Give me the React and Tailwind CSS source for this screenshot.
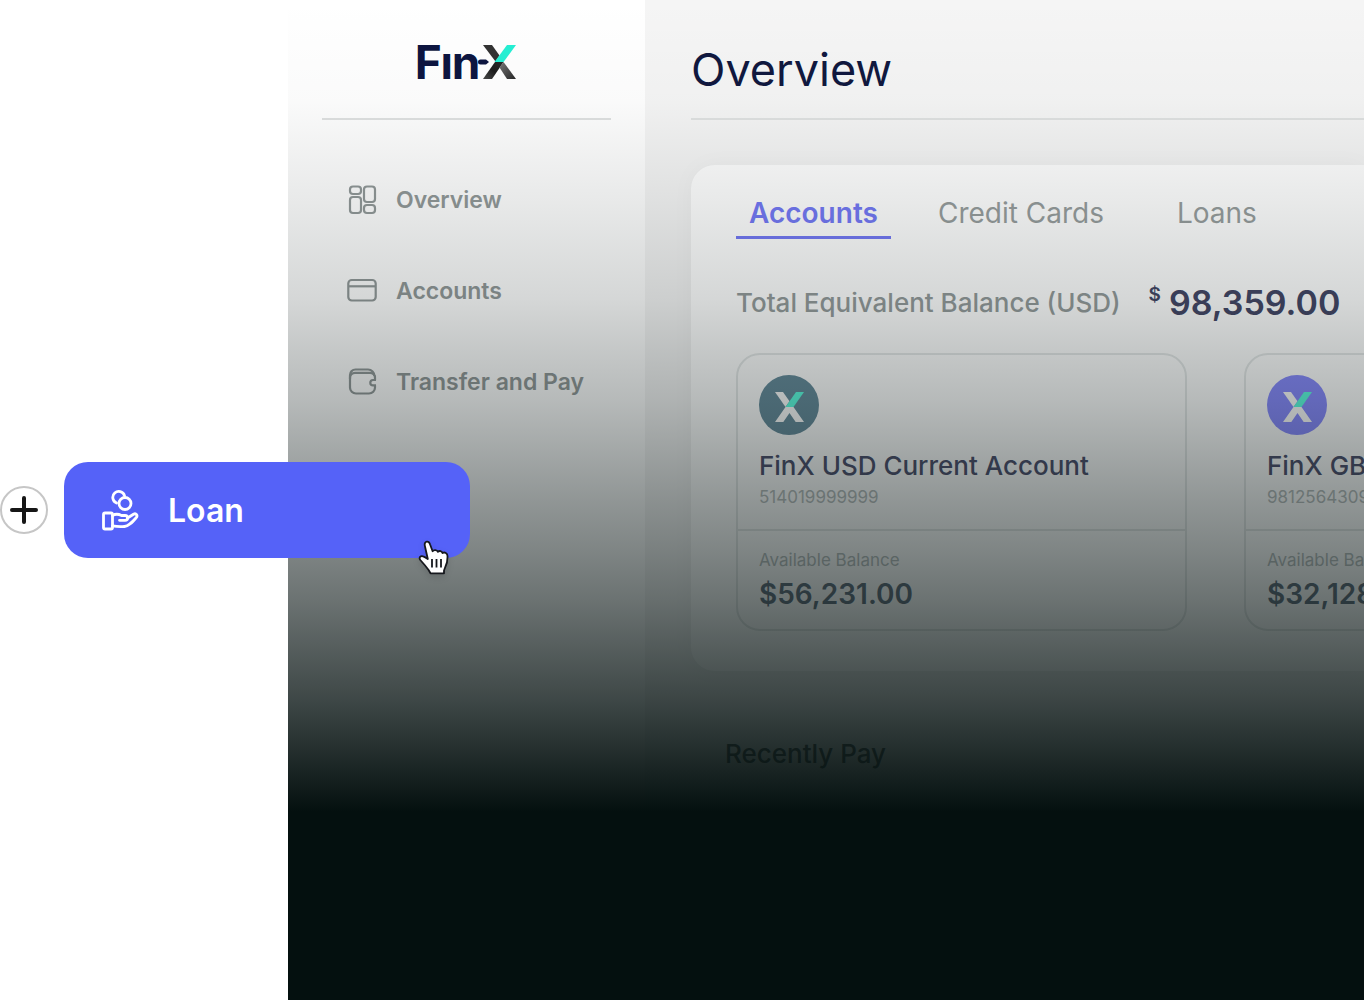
import React, { useState } from 'react';

const navItems = [
  { id: 'overview', label: 'Overview', icon: GridIcon },
  { id: 'accounts', label: 'Accounts', icon: CardIcon },
  { id: 'transfer', label: 'Transfer and Pay', icon: WalletIcon },
];

const tabs = ['Accounts', 'Credit Cards', 'Loans'];

const accounts = [
  { name: 'FinX USD Current Account', number: '514019999999', balance: '$56,231.00', badge: 'bg-[#688d9d]' },
  { name: 'FinX GBP Current Account', number: '981256430999', balance: '$32,128.00', badge: 'bg-[#8a8cff]' },
];

function GridIcon() {
  return (
    <svg width="30" height="30" viewBox="0 0 30 30" fill="none" stroke="currentColor" strokeWidth="2.2">
      <rect x="3" y="1.500" width="11" height="7.500" rx="3" />
      <rect x="3" y="12" width="11" height="16" rx="3" />
      <rect x="17" y="1.500" width="11" height="15.500" rx="3" />
      <rect x="17" y="20" width="11" height="8" rx="3" />
    </svg>
  );
}

function CardIcon() {
  return (
    <svg width="30" height="30" viewBox="0 0 30 30" fill="none" stroke="currentColor" strokeWidth="2.2">
      <rect x="1.300" y="4" width="27.400" height="20.500" rx="3.500" />
      <path d="M1.300 10.300h27.400" />
    </svg>
  );
}

function WalletIcon() {
  return (
    <svg width="30" height="30" viewBox="0 0 30 30" fill="none" stroke="currentColor" strokeWidth="2.2">
      <path d="M28 13v-2a5 5 0 0 0-5-5.200H8a5 5 0 0 0-5 5.200v9.500a6 6 0 0 0 6 6h13a6 6 0 0 0 6-6v-2" />
      <path d="M3 12V8a5.500 5.500 0 0 1 5.500-5.500h12.500A6.500 6.500 0 0 1 27.500 9" />
      <path d="M29 13h-3a2.700 2.700 0 0 0 0 5.400h3" />
    </svg>
  );
}

function LoanIcon() {
  return (
    <svg width="38" height="42" viewBox="0 0 38 42" fill="none" stroke="currentColor" strokeWidth="2.8" strokeLinecap="round" strokeLinejoin="round">
      <path d="M15.500 13a6 6 0 1 1 8-7.400" />
      <circle cx="24" cy="13.500" r="6" />
      <rect x="2.500" y="23" width="9" height="16" rx="1.500" />
      <path d="M11.500 25.500c3-1.800 6-1.500 9 0H24c3.500 0 3.500 4.800 0 4.800h-5.500" />
      <path d="M26.500 28l6-3.800c2.600-1.500 4.600 1.500 2.600 3.600C31 32.500 28 36 23.500 36.500c-4.500.4-8 .2-12-.6" />
    </svg>
  );
}

// X mark used on the account badges
function XMark() {
  return (
    <svg className="w-[29px] h-[30px] mt-1" viewBox="0 0 29 30">
      <path d="M0 0h8l6.500 9.300-4 5.700z" fill="#fff" />
      <path d="M21 0h8L18.500 15h-8z" fill="#5fffe1" />
      <path d="M0 30l10.500-15h8L29 30h-8.300L14.500 21 8.300 30z" fill="#fff" />
    </svg>
  );
}

function Logo() {
  return (
    <a href="#home" aria-label="FinX" className="flex items-center justify-center h-[50px] pr-0.5 text-[#0d1540]">
      <span className="text-[46px] leading-[50px] font-bold tracking-tight">Fın</span>
      <svg className="w-[38px] h-[34px] -ml-px" viewBox="0 0 38 34">
        <defs>
          <linearGradient id="leg-left" x1="0" y1="1" x2="1" y2="0">
            <stop offset="0" stopColor="#4a4a4a" />
            <stop offset="0.5" stopColor="#1c1c1c" />
            <stop offset="1" stopColor="#2a2a2a" />
          </linearGradient>
          <linearGradient id="leg-right" x1="0" y1="0" x2="1" y2="1">
            <stop offset="0" stopColor="#777" />
            <stop offset="1" stopColor="#262626" />
          </linearGradient>
        </defs>
        <path d="M2.500 14.500H8l3 2.500-3 2.500H2.500a2.500 2.500 0 0 1 0-5z" fill="#0d1540" />
        <path d="M5 0h9l7.500 10.500-4 6z" fill="#333" />
        <path d="M29 0h9L25.500 17h-9z" fill="#25f0d4" />
        <path d="M5 34l12-17h8.500l-4 6L14 34z" fill="url(#leg-left)" />
        <path d="M21.500 22.500l4-5.500L38 34h-9z" fill="url(#leg-right)" />
      </svg>
    </a>
  );
}

function AccountCard({ account }) {
  return (
    <article className="w-[451px] shrink-0 rounded-3xl border-2 border-[#e6e9e9]">
      <div className="px-[21px] pt-5 pb-5 border-b-2 border-[#e6e9e9]">
        <div className={`w-[60px] h-[60px] rounded-full flex items-center justify-center ${account.badge}`}>
          <XMark />
        </div>
        <h3 className="mt-[15px] text-[26px] leading-8 font-medium text-[#505370] whitespace-nowrap">{account.name}</h3>
        <p className="mt-[3px] text-[17px] leading-6 text-[#b8bebe]">{account.number}</p>
      </div>
      <div className="px-[21px] pt-[17px] pb-[17px]">
        <p className="text-[17px] leading-6 text-[#b8bfbf]">Available Balance</p>
        <p className="mt-1 text-[28px] leading-9 font-semibold text-[#64717f]">{account.balance}</p>
      </div>
    </article>
  );
}

function HandCursor() {
  return (
    <svg className="w-8 h-9 drop-shadow-md" viewBox="0 0 32 36" fill="#fff" stroke="#16181d" strokeWidth="1.800" strokeLinejoin="round">
      <path d="M9.800 19L7 6.500C6.200 3.800 7 2 8.800 1.700c1.800-.2 2.700.8 3.300 2.800l2.500 6.700c1-1.600 4.600-1.500 5.200.6 1.400-1.400 4.200-.9 4.700 1.200 2.200-1.200 5 0 5 3 .1 3-.4 7.800-2.200 11l-1.300 3.500v2.800H12.500L10.600 30C8 26.500 5.500 23.500 2.300 20c-1.700-2.400.2-4.600 2.800-3.600 1.800.6 3 1.400 4.700 2.600z" />
      <path d="M14 19v8.500M18.500 19v8.500M23 19v8.500" />
    </svg>
  );
}

const App = () => {
  const [activeTab, setActiveTab] = useState('Accounts');

  return (
    <div className="relative flex min-h-screen overflow-hidden bg-white pl-72 font-['Inter',sans-serif]">
      <div className="relative flex flex-1 min-w-0">
        {/* Sidebar */}
        <aside className="w-[357px] shrink-0 bg-white px-[34px]">
          <div className="pt-[37px] pb-[31px] border-b-2 border-[#dfe1e1]">
            <Logo />
          </div>
          <nav className="mt-[57px] flex flex-col gap-[45px] pl-[25px]">
            {navItems.map(({ id, label, icon: Icon }) => (
              <a key={id} href={`#${id}`} className="flex items-center gap-[19px] h-[46px] text-[#929999]">
                <Icon />
                <span className="text-[23px] leading-8 font-semibold whitespace-nowrap">{label}</span>
              </a>
            ))}
          </nav>
        </aside>

        {/* Content */}
        <main className="flex-1 min-w-0 overflow-hidden bg-[#f5f5f5] pl-[46px]">
          <header className="pt-10 pb-[18px] border-b-2 border-[#dfe1e1]">
            <h1 className="text-[45px] leading-[60px] text-[#10183f]">Overview</h1>
          </header>

          <section className="mt-[45px] rounded-l-3xl bg-white pl-[45px] pt-[26px] pb-10 shadow-[0_0_24px_rgba(0,0,0,0.03)]">
            <div role="tablist" className="flex">
              {tabs.map((tab) => (
                <button
                  key={tab}
                  role="tab"
                  aria-selected={activeTab === tab}
                  onClick={() => setActiveTab(tab)}
                  className={
                    activeTab === tab
                      ? 'mr-[34px] px-[13px] pb-px border-b-[3px] border-[#7479f5] text-[28px] leading-[44px] font-semibold text-[#7479f5] whitespace-nowrap'
                      : 'mr-[47px] px-[13px] pb-px border-b-[3px] border-transparent text-[28px] leading-[44px] text-[#979d9d] whitespace-nowrap'
                  }
                >
                  {tab}
                </button>
              ))}
            </div>

            <div className="mt-[40px] flex items-center h-12 whitespace-nowrap">
              <h2 className="text-[26px] leading-8 font-medium text-[#949b9b]">Total Equivalent Balance (USD)</h2>
              <span className="ml-7 mb-4 text-[19px] leading-6 font-semibold text-[#444766]">$</span>
              <span className="ml-2 text-[34px] leading-[46px] font-semibold text-[#444766]">98,359.00</span>
            </div>

            <div className="mt-[26px] flex gap-[57px]">
              {accounts.map((account) => (
                <AccountCard key={account.number} account={account} />
              ))}
            </div>
          </section>

          <h2 className="mt-[67px] ml-[34px] text-[26px] leading-8 font-medium text-[#606868]">Recently Pay</h2>
        </main>

        {/* Fade to dark towards the bottom */}
        <div className="pointer-events-none absolute inset-0 bg-[linear-gradient(180deg,rgba(4,16,15,0)_0px,rgba(4,16,15,0.02)_100px,rgba(4,16,15,0.09)_200px,rgba(4,16,15,0.17)_300px,rgba(4,16,15,0.23)_350px,rgba(4,16,15,0.29)_400px,rgba(4,16,15,0.35)_440px,rgba(4,16,15,0.44)_500px,rgba(4,16,15,0.51)_550px,rgba(4,16,15,0.59)_600px,rgba(4,16,15,0.68)_650px,rgba(4,16,15,0.77)_700px,rgba(4,16,15,0.87)_750px,rgba(4,16,15,1)_812px)]" />
      </div>

      {/* New menu entry being dropped over the sidebar */}
      <div className="absolute left-0 top-[462px] flex items-center gap-4">
        <button aria-label="Add" className="w-12 h-12 rounded-full border-2 border-[#c6c6c6] bg-white flex items-center justify-center">
          <svg width="28" height="28" viewBox="0 0 28 28" stroke="#161616" strokeWidth="4" strokeLinecap="round">
            <path d="M14 2v24M2 14h24" />
          </svg>
        </button>
        <a href="#loan" className="relative flex items-center gap-[29px] w-[406px] h-24 pl-[37px] pt-[2px] rounded-3xl bg-[#5562f8] text-white">
          <LoanIcon />
          <span className="text-[32px] leading-10 font-semibold">Loan</span>
          <span className="absolute right-5 -bottom-[18px]">
            <HandCursor />
          </span>
        </a>
      </div>
    </div>
  );
};

export default App;
